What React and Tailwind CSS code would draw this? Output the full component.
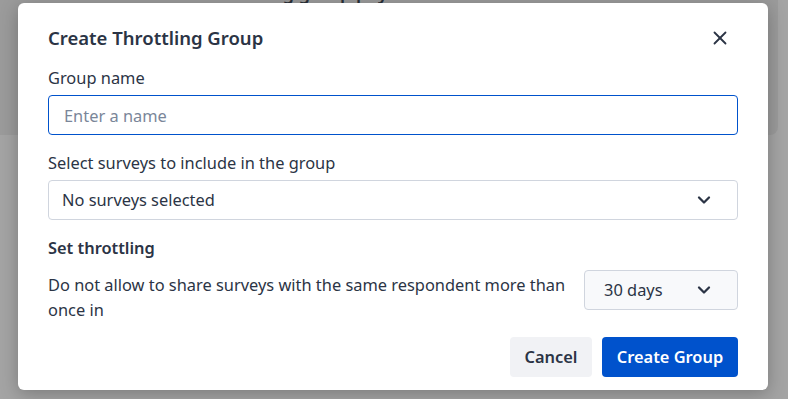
import { ChevronDown, X } from "lucide-react";

export default function App() {
  return (
    <div className="relative w-full h-[399px] overflow-hidden bg-[#a4a4a4] font-['Noto_Sans',sans-serif] text-[#2b3445]">
      <div className="h-[155px] w-[778px] bg-[#9b9b9b] rounded-br-lg">
        <div className="pl-[255px] -mt-[20px] text-[18px] font-semibold text-[#2a2f38]">ding group pay</div>
      </div>

      <div className="absolute left-[18px] top-[3px] w-[750px] h-[387px] bg-white rounded-md shadow-[0_4px_18px_rgba(0,0,0,0.25)] px-[30px] pt-[21px]">
        <div className="flex items-center justify-between">
          <h1 className="text-[18.5px] leading-7 font-semibold">Create Throttling Group</h1>
          <X size={22} strokeWidth={2} className="text-[#2b3445] mr-[7px]" />
        </div>

        <label className="block mt-[14px] text-[16.4px] leading-6">Group name</label>
        <input
          type="text"
          placeholder="Enter a name"
          className="mt-[5px] w-full h-10 px-[15px] rounded border border-[#0052cc] outline-none text-[16.4px] placeholder:text-[#7a8699]"
        />

        <label className="block mt-4 text-[16.4px] leading-6">Select surveys to include in the group</label>
        <div className="mt-[5px] w-full h-10 pl-[13px] pr-[23px] rounded border border-[#d0d5de] flex items-center justify-between">
          <span className="text-[16.4px]">No surveys selected</span>
          <ChevronDown size={20} strokeWidth={2.75} />
        </div>

        <div className="mt-4 text-[16.4px] leading-6 font-semibold">Set throttling</div>
        <div className="mt-[10px] flex items-start justify-between gap-4">
          <p className="mt-[2px] text-[16.4px] leading-[25px] w-[525px]">
            Do not allow to share surveys with the same respondent more than once in
          </p>
          <div className="w-[155px] h-10 pl-[19px] pr-[23px] rounded border border-[#d0d5de] bg-[#f8f9fb] flex items-center justify-between">
            <span className="text-[16.4px]">30 days</span>
            <ChevronDown size={20} strokeWidth={2.75} />
          </div>
        </div>

        <div className="mt-[15px] flex justify-end gap-[10px]">
          <button className="h-10 w-[82px] rounded bg-[#f1f2f5] text-[16.4px] font-semibold text-[#2b3445]">Cancel</button>
          <button className="h-10 w-[136px] rounded bg-[#0052cc] text-[16.4px] font-semibold text-white">Create Group</button>
        </div>
      </div>
    </div>
  );
}
